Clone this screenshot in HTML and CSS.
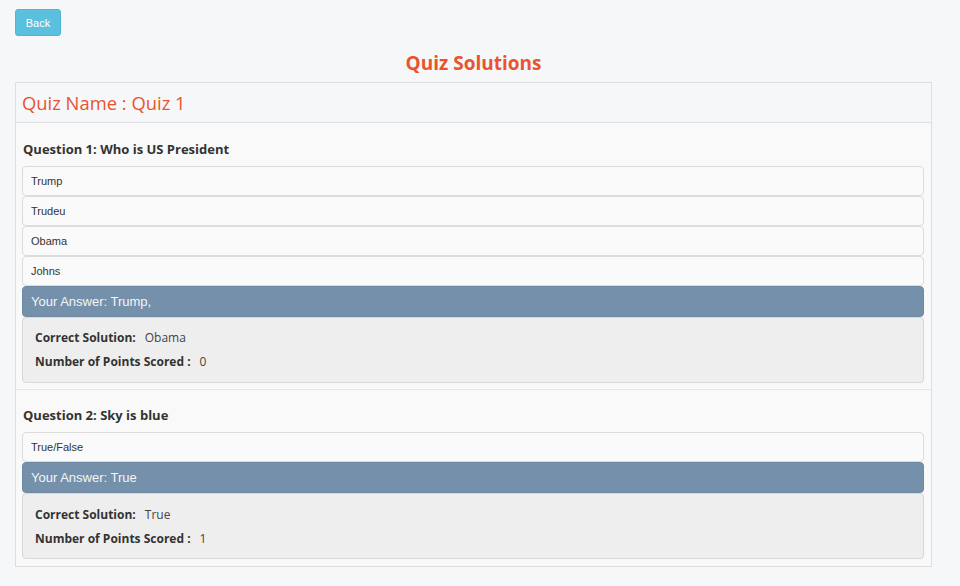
FILE: index.html
```html
<!DOCTYPE html>
<html>
<head>
<meta charset="utf-8">
<link rel="stylesheet" href="styles.css">
</head>
<body>
<div class="page">
  <button class="btn-back">Back</button>
  <h2 class="title">Quiz Solutions</h2>
  <div class="card">
    <div class="card-header">Quiz Name : Quiz 1</div>
    <div class="question">
      <h4 class="q-title">Question 1: Who is US President</h4>
      <div class="option">Trump</div>
      <div class="option">Trudeu</div>
      <div class="option">Obama</div>
      <div class="option">Johns</div>
      <div class="answer">Your Answer: Trump,</div>
      <div class="well">
        <div class="row"><span class="label">Correct Solution:</span><span class="value">Obama</span></div>
        <div class="row"><span class="label">Number of Points Scored :</span><span class="value">0</span></div>
      </div>
    </div>
    <div class="question sep">
      <h4 class="q-title">Question 2: Sky is blue</h4>
      <div class="option">True/False</div>
      <div class="answer">Your Answer: True</div>
      <div class="well">
        <div class="row"><span class="label">Correct Solution:</span><span class="value">True</span></div>
        <div class="row"><span class="label">Number of Points Scored :</span><span class="value">1</span></div>
      </div>
    </div>
  </div>
</div>
</body>
</html>
```
FILE: styles.css
```css
html, body {
  margin: 0;
  padding: 0;
  background: #f6f7f9;
}
.page {
  width: 917px;
  margin-left: 15px;
  padding-top: 9px;
  font-family: "Open Sans", sans-serif;
  color: #333;
}
.btn-back {
  display: block;
  width: 46px;
  height: 27px;
  padding: 0;
  border: 1px solid #4fb6d6;
  border-radius: 3px;
  background: #5bc0de;
  color: #fff;
  font-family: "Liberation Sans", Arial, sans-serif;
  font-size: 11px;
  cursor: pointer;
}
.title {
  margin: 13px 0 0 0;
  height: 33px;
  line-height: 28px;
  text-align: center;
  font-size: 19px;
  font-weight: 700;
  color: #e8542e;
}
.card {
  border: 1px solid #dedede;
  background: #f9f9f9;
  padding-bottom: 7px;
}
.card-header {
  height: 39px;
  line-height: 40px;
  padding-left: 6px;
  border-bottom: 1px solid #dedede;
  background: #f6f7f9;
  font-size: 18.4px;
  font-weight: 400;
  color: #e8542e;
}
.question {
  padding: 17px 7px 0 6px;
}
.question.sep {
  margin-top: 6px;
  border-top: 1px solid #e6e6e6;
  padding-top: 16px;
}
.q-title {
  margin: 0 0 8px 1px;
  height: 18px;
  line-height: 18px;
  font-size: 13px;
  font-weight: 700;
  color: #333;
}
.option {
  height: 28px;
  line-height: 28px;
  padding-left: 8px;
  border: 1px solid #dcdcdc;
  border-radius: 4px;
  background: #fafafa;
  font-family: "Liberation Sans", Arial, sans-serif;
  font-size: 11px;
  color: #333;
}
.answer {
  height: 29px;
  line-height: 29px;
  padding-left: 8px;
  border: 1px solid #7089a2;
  border-radius: 4px;
  background: #7590aa;
  font-family: "Liberation Sans", Arial, sans-serif;
  font-size: 13px;
  color: #f4f6f8;
}
.well {
  display: flex;
  flex-direction: column;
  gap: 6px;
  box-sizing: border-box;
  height: 66px;
  padding: 11px 12px 0 12px;
  border: 1px solid #d8d8d8;
  border-radius: 4px;
  background: #eeeeee;
}
.sep .well {
  padding-top: 12px;
}
.row {
  height: 18px;
  line-height: 18px;
  font-size: 12px;
}
.label {
  font-weight: 700;
  color: #333;
  margin-right: 9px;
}
.value {
  color: #444;
}
```
